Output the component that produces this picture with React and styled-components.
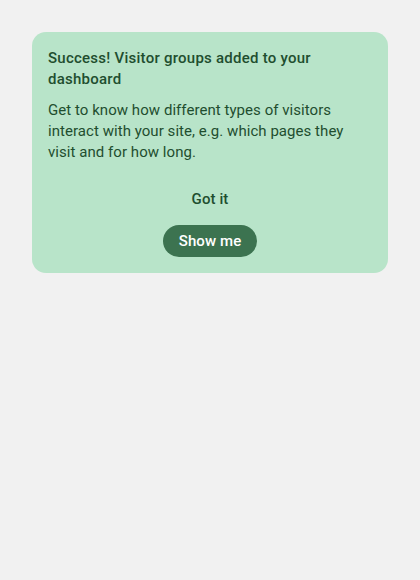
import React from 'react';
import styled, { createGlobalStyle } from 'styled-components';

const GlobalStyle = createGlobalStyle`
  body {
    margin: 0;
    background: #f1f1f1;
    font-family: Roboto, "Liberation Sans", sans-serif;
  }
`;

const Page = styled.div`
  padding: 32px;
`;

const Card = styled.div`
  background: #b8e4c9;
  border-radius: 14px;
  padding: 16px 16px 16px;
  color: #1f4e2f;
  display: flex;
  flex-direction: column;
`;

const Title = styled.h2`
  margin: 0;
  font-size: 15px;
  font-weight: 500;
  line-height: 21px;
  letter-spacing: 0.25px;
`;

const Body = styled.p`
  margin: 10px 0 0;
  font-size: 15px;
  line-height: 21px;
  letter-spacing: 0.05px;
`;

const Actions = styled.div`
  margin-top: 18px;
  display: flex;
  flex-direction: column;
  align-items: center;
  gap: 8px;
`;

const Button = styled.button`
  font-family: inherit;
  font-size: 15px;
  font-weight: 500;
  letter-spacing: 0.1px;
  border: none;
  cursor: pointer;
  height: ${(p) => (p.$filled ? '32px' : '36px')};
  padding: 0 16px;
  border-radius: 16px;
  background: ${(p) => (p.$filled ? '#3c7350' : 'transparent')};
  color: ${(p) => (p.$filled ? '#ffffff' : '#1f4e2f')};
`;

export default function App() {
  return (
    <>
      <GlobalStyle />
      <Page>
        <Card>
          <Title>Success! Visitor groups added to your dashboard</Title>
          <Body>
            Get to know how different types of visitors interact with your site, e.g. which pages they
            visit and for how long.
          </Body>
          <Actions>
            <Button>Got it</Button>
            <Button $filled>Show me</Button>
          </Actions>
        </Card>
      </Page>
    </>
  );
}
